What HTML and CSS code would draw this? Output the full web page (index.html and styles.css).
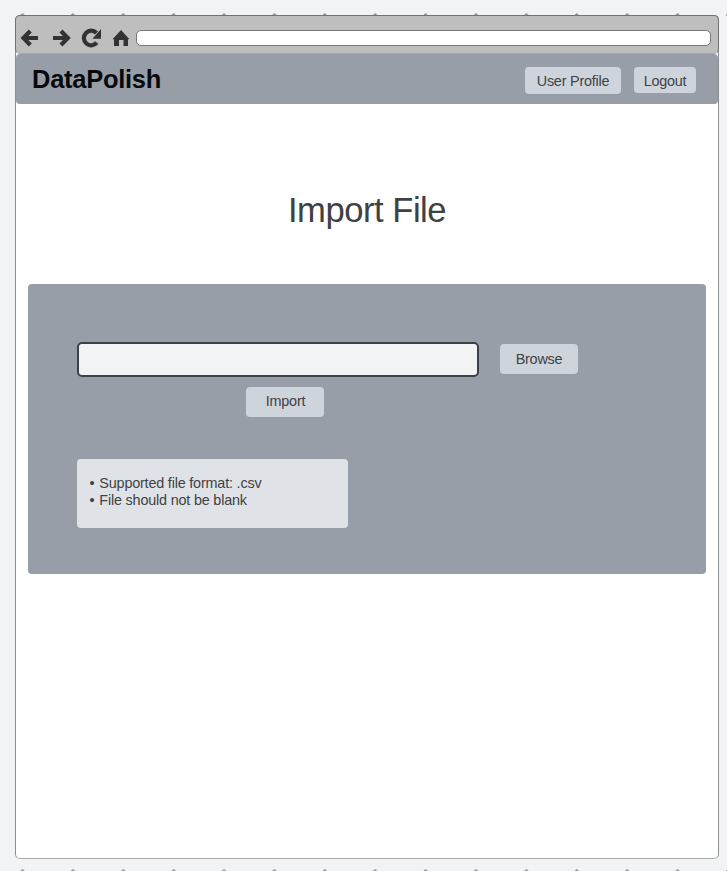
FILE: index.html
```html
<!DOCTYPE html>
<html lang="en">
<head>
<meta charset="utf-8">
<title>DataPolish</title>
<link rel="stylesheet" href="styles.css">
</head>
<body>
<div class="window">
  <div class="chrome">
    <svg class="nav" width="120" height="24" viewBox="16 26 120 24">
      <g fill="none" stroke="#333" stroke-width="4.2">
        <path d="M38 38H25M30.300 31L23.500 38l6.800 7"/>
        <path d="M53 38H66M61 31L67.800 38l-6.800 7"/>
        <path d="M96.500 33A7.300 7.300 0 1 0 96.800 42.700"/>
      </g>
      <path fill="#333" d="M101 29v9.700H92.500zM121 30l8.500 9.300h-1.500V46h-4.500v-6h-4.500v6h-5v-6.700h-1.500z"/>
    </svg>
    <div class="address"></div>
  </div>
  <header class="header">
    <div class="brand">DataPolish</div>
    <button class="btn profile">User Profile</button>
    <button class="btn logout">Logout</button>
  </header>
  <main>
    <h1>Import File</h1>
    <section class="panel">
      <div class="row">
        <input class="file" type="text" aria-label="File">
        <button class="btn browse">Browse</button>
      </div>
      <button class="btn import">Import</button>
      <ul class="notes">
        <li>Supported file format: .csv</li>
        <li>File should not be blank</li>
      </ul>
    </section>
  </main>
</div>
</body>
</html>
```
FILE: styles.css
```css
* { box-sizing: border-box; }
body {
  margin: 0;
  height: 871px;
  padding: 15px 8px 0 15px;
  overflow: hidden;
  font-family: "Liberation Sans", Arial, sans-serif;
  color: #404143;
  background-color: #f1f3f5;
  background-image: radial-gradient(circle at 22.5px 2px, #999 1.4px, transparent 2px), radial-gradient(circle at 22.5px 2px, #999 1.4px, transparent 2px);
  background-size: 50.4px 4px;
  background-position: 0 13px, 0 869px;
  background-repeat: repeat-x;
}
.window {
  width: 704px;
  height: 844px;
  border: 1px solid #8c8f92;
  border-bottom-color: #aaa;
  border-radius: 5px;
  background: #fff;
}
.chrome {
  display: flex;
  margin: -1px -1px 0;
  width: 704px;
  height: 39px;
  padding: 10px 0 0;
  border: 1px solid #707274;
  border-bottom-color: #a6a7a9;
  border-radius: 5px;
  background: #bebebe;
}
.nav { flex: none; }
.address {
  width: 575px;
  height: 16px;
  margin-top: 4px;
  border: 1px solid #777;
  border-radius: 5px;
  background: #fff;
}
.header {
  display: flex;
  height: 50px;
  padding: 13px 22px 0 16px;
  border-radius: 4px;
  background: #979ea8;
}
.brand {
  width: 494px;
  margin-top: -3px;
  font-size: 25.5px;
  line-height: 30px;
  font-weight: bold;
  letter-spacing: -0.28px;
  color: #08090b;
}
.btn {
  display: block;
  flex: none;
  padding: 0;
  border: 0;
  border-radius: 4px;
  background: #ced4dc;
  color: #404143;
  font: 14.4px/28px "Liberation Sans", Arial, sans-serif;
  letter-spacing: -0.22px;
}
.profile { width: 96px; height: 27px; }
.logout { width: 62px; height: 26px; margin-left: 13px; }
h1 {
  margin: 86px 0 0;
  height: 94px;
  font-size: 34.6px;
  line-height: 40px;
  font-weight: normal;
  letter-spacing: -0.47px;
  text-align: center;
}
.panel {
  width: 678px;
  height: 290px;
  margin-left: 12px;
  padding: 58px 49px 0;
  border-radius: 4px;
  background: #979ea8;
}
.row { display: flex; }
.file {
  width: 402px;
  height: 35px;
  padding: 0 8px;
  border: 2px solid #3a414a;
  border-radius: 5px;
  background: #f1f3f5;
}
.browse { width: 78px; height: 30px; margin: 2px 0 0 21px; }
.import { width: 78px; height: 30px; margin: 10px 0 0 169px; padding: 0 0 2px 1px; }
.notes {
  width: 271px;
  height: 69px;
  margin: 42px 0 0;
  padding: 16px 0 0 12.5px;
  list-style: none;
  border-radius: 4px;
  background: #dfe3e8;
  font-size: 14.4px;
  line-height: 17px;
  letter-spacing: -0.19px;
}
.notes li::before { content: "•"; margin-right: 5px; }
```
